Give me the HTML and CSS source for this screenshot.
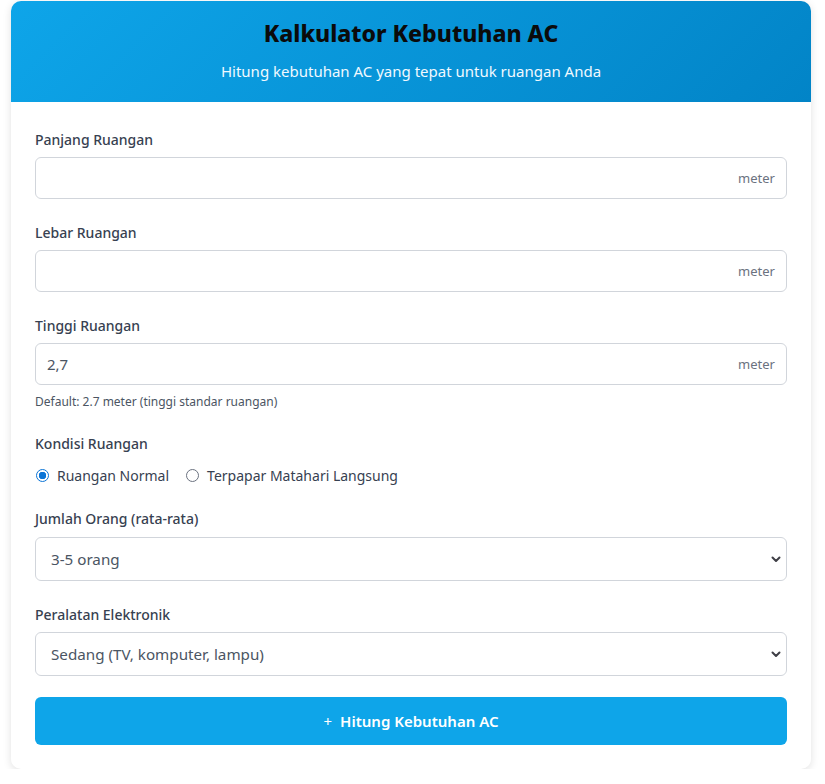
FILE: index.html
```html
<!DOCTYPE html>
<html lang="id">
<head>
<meta charset="utf-8">
<title>Kalkulator Kebutuhan AC</title>
<link rel="stylesheet" href="styles.css">
</head>
<body>
<div class="card">
  <div class="header">
    <h1 class="title">Kalkulator Kebutuhan AC</h1>
    <p class="subtitle">Hitung kebutuhan AC yang tepat untuk ruangan Anda</p>
  </div>
  <form class="body">
    <div class="group">
      <label class="label">Panjang Ruangan</label>
      <div class="field">
        <input class="input" type="text" value="">
        <span class="unit">meter</span>
      </div>
    </div>
    <div class="group">
      <label class="label">Lebar Ruangan</label>
      <div class="field">
        <input class="input" type="text" value="">
        <span class="unit">meter</span>
      </div>
    </div>
    <div class="group">
      <label class="label">Tinggi Ruangan</label>
      <div class="field">
        <input class="input" type="text" value="2,7">
        <span class="unit">meter</span>
      </div>
      <p class="help">Default: 2.7 meter (tinggi standar ruangan)</p>
    </div>
    <div class="group radio-group">
      <label class="label">Kondisi Ruangan</label>
      <div class="radios">
        <label class="radio"><span class="dot checked"></span>Ruangan Normal</label>
        <label class="radio"><span class="dot"></span>Terpapar Matahari Langsung</label>
      </div>
    </div>
    <div class="group sel-group">
      <label class="label">Jumlah Orang (rata-rata)</label>
      <div class="select">
        <span>3-5 orang</span>
        <svg class="chev" width="10" height="7" viewBox="0 0 10 7"><path d="M1.5 1.5 L5 5 L8.5 1.5" fill="none" stroke="#3f3f46" stroke-width="2" stroke-linecap="round" stroke-linejoin="round"/></svg>
      </div>
    </div>
    <div class="group sel-group last">
      <label class="label">Peralatan Elektronik</label>
      <div class="select">
        <span>Sedang (TV, komputer, lampu)</span>
        <svg class="chev" width="10" height="7" viewBox="0 0 10 7"><path d="M1.5 1.5 L5 5 L8.5 1.5" fill="none" stroke="#3f3f46" stroke-width="2" stroke-linecap="round" stroke-linejoin="round"/></svg>
      </div>
    </div>
    <button class="btn" type="button"><span class="plus">+</span>Hitung Kebutuhan AC</button>
  </form>
</div>
</body>
</html>
```

FILE: styles.css
```css
* { box-sizing: border-box; }
html, body { margin: 0; padding: 0; background: #ffffff; }
body {
  font-family: "Noto Sans", "Open Sans", sans-serif;
  color: #374151;
  padding: 1px 0 0 11px;
}
.card {
  width: 800px;
  background: #fff;
  border-radius: 10px;
  box-shadow: 0 2px 8px rgba(0,0,0,0.12);
  overflow: hidden;
}
.header {
  height: 101px;
  background: linear-gradient(135deg, #0ea5e9 0%, #0284c7 100%);
  text-align: center;
  padding-top: 17px;
}
.title {
  margin: 0;
  font-size: 23px;
  line-height: 30px;
  font-weight: 800;
  color: #0b0b0b;
}
.subtitle {
  margin: 13px 0 0;
  font-size: 15px;
  line-height: 20px;
  color: #f0f9ff;
}
.body {
  padding: 27px 24px 24px;
}
.group { margin-bottom: 23px; }
.group.radio-group { margin-bottom: 22px; }
.group.last { margin-bottom: 21px; }
.label {
  display: block;
  font-size: 14px;
  line-height: 21px;
  font-weight: 500;
  color: #374151;
  margin-bottom: 7px;
}
.sel-group .label { margin-bottom: 8px; }
.sel-group.last .label { margin-bottom: 7px; }
.field {
  display: flex;
  align-items: center;
  height: 42px;
  border: 1px solid #d1d5db;
  border-radius: 6px;
  padding: 0 11px;
}
.input {
  flex: 1;
  border: 0;
  outline: 0;
  font: inherit;
  font-size: 15px;
  color: #4b5563;
  padding: 0;
  background: transparent;
}
.unit {
  font-size: 13px;
  color: #6b7280;
}
.help {
  margin: 9px 0 0;
  font-size: 12px;
  color: #4b5563;
  line-height: 16px;
}
.radios {
  display: flex;
  gap: 16px;
  margin-top: 11px;
}
.radio {
  display: flex;
  align-items: center;
  font-size: 14px;
  color: #374151;
  line-height: 21px;
}
.dot {
  width: 13px;
  height: 13px;
  border-radius: 50%;
  border: 1px solid #6b7280;
  margin: 0 8px 0 1px;
  background: #fff;
}
.dot.checked {
  border: 1px solid #0b74d6;
  background: radial-gradient(circle, #0b74d6 0 3.5px, #fff 4px);
}
.select {
  display: flex;
  align-items: center;
  justify-content: space-between;
  height: 44px;
  border: 1px solid #d1d5db;
  border-radius: 6px;
  padding: 0 5px 0 15px;
  font-size: 15.2px;
  color: #4b5563;
}
.chev { margin-top: 1px; }
.btn {
  display: flex;
  justify-content: center;
  align-items: center;
  width: 100%;
  height: 48px;
  border: 0;
  border-radius: 6px;
  background: #0ea5e9;
  color: #fff;
  font: inherit;
  font-size: 15px;
  font-weight: 600;
}
.plus { margin-right: 8px; font-weight: 400; }
```
